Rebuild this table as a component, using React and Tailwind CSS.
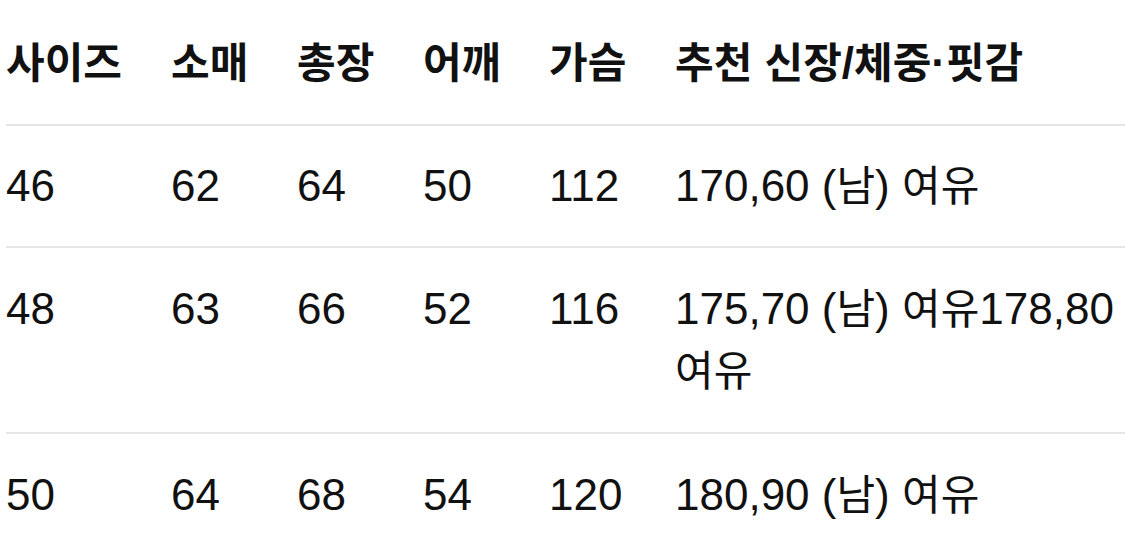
const HEAD = ['사이즈', '소매', '총장', '어깨', '가슴', '추천 신장/체중·핏감'];

const ROWS = [
  { pad: 'pt-[29px] pb-[29px]', cells: ['46', '62', '64', '50', '112', ['170,60 (남) 여유']] },
  { pad: 'pt-[30px] pb-[30px]', cells: ['48', '63', '66', '52', '116', ['175,70 (남) 여유178,80', '여유']] },
  { pad: 'pt-[30px] pb-[29px]', cells: ['50', '64', '68', '54', '120', ['180,90 (남) 여유']] },
];

const COL_W = ['w-[165px]', 'w-[126px]', 'w-[126px]', 'w-[126px]', 'w-[126px]', ''];

// Hangul runs get a slightly smaller size so they sit like the reference's system font
function Mixed({ text }) {
  const parts = text.split(/([\uAC00-\uD7A3]+)/);
  return parts.map((p, i) =>
    /[\uAC00-\uD7A3]/.test(p) ? (
      <span key={i} className="text-[42px] leading-none">{p}</span>
    ) : (
      <span key={i}>{p}</span>
    )
  );
}

export default function App() {
  return (
    <div
      className="w-[1125px] h-[542px] overflow-hidden bg-white text-[#111] pl-[6px]"
      style={{ fontFamily: '"Liberation Sans", "Noto Sans CJK KR", sans-serif' }}
    >
      <table className="w-[1119px] border-collapse table-fixed text-[44px] leading-[62px]">
        <thead>
          <tr className="border-b-2 border-[#e6e6e6]">
            {HEAD.map((h, i) => (
              <th key={i} className={`${COL_W[i]} text-left font-bold pt-[32px] pb-[30px] whitespace-nowrap`}>
                <Mixed text={h} />
              </th>
            ))}
          </tr>
        </thead>
        <tbody>
          {ROWS.map((r, ri) => (
            <tr key={ri} className={ri < ROWS.length - 1 ? 'border-b-2 border-[#e6e6e6]' : ''}>
              {r.cells.map((c, ci) => (
                <td key={ci} className={`${r.pad} text-left align-top whitespace-nowrap font-normal`}>
                  {Array.isArray(c)
                    ? c.map((line, li) => (
                        <div key={li}>
                          <Mixed text={line} />
                        </div>
                      ))
                    : c}
                </td>
              ))}
            </tr>
          ))}
        </tbody>
      </table>
    </div>
  );
}
